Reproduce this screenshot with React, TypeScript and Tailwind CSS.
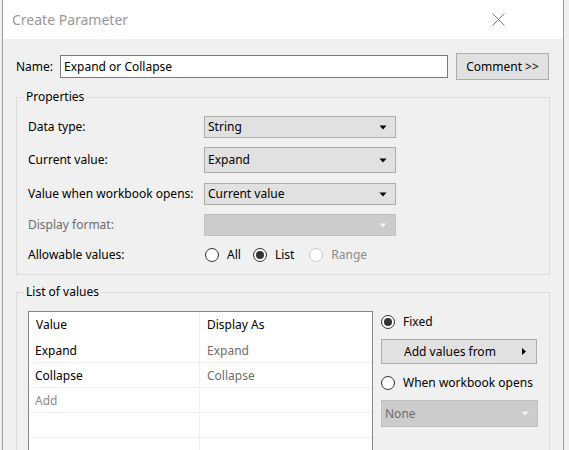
import React from "react";

function Radio({ checked, disabled }: { checked?: boolean; disabled?: boolean }) {
  return (
    <span
      className={
        "w-[14px] h-[14px] rounded-full border flex items-center justify-center shrink-0 bg-white " +
        (disabled ? "border-[#cccccc]" : "border-[#333333]")
      }
    >
      {checked && <span className="w-[8px] h-[8px] rounded-full bg-[#333333]" />}
    </span>
  );
}

function DownArrow({ disabled }: { disabled?: boolean }) {
  return (
    <svg width="8" height="5" viewBox="0 0 8 5" className="shrink-0">
      <path d="M0.5 0.5 L7.5 0.5 L4 4.5 Z" fill={disabled ? "#f4f4f4" : "#000"} />
    </svg>
  );
}

function Select({ value, h, disabled, w }: { value?: string; h: string; disabled?: boolean; w: string }) {
  return (
    <div
      className={
        "flex items-center justify-between pl-[3px] pr-[8px] border " +
        h +
        " " +
        w +
        " " +
        (disabled ? "bg-[#cccccc] border-[#bfbfbf] text-[#6d6d6d]" : "bg-[#e1e1e1] border-[#adadad] text-black")
      }
    >
      <span>{value}</span>
      <DownArrow disabled={disabled} />
    </div>
  );
}

export default function App() {
  const font = { fontFamily: '"Noto Sans", "Open Sans", sans-serif' };
  return (
    <div className="w-[569px] h-[450px] bg-[#f0f0f0] overflow-hidden text-[12px] leading-[16px] text-black" style={font}>
      <div className="ml-[2px] w-[562px] h-[450px] border-l border-r border-[#9a9a9a] bg-[#f0f0f0] flex flex-col">
        {/* title bar */}
        <div className="h-[39px] bg-white flex items-center justify-between shrink-0">
          <span className="pl-[9px] text-[14px] text-[#999999] leading-[20px]">Create Parameter</span>
          <svg width="13" height="13" viewBox="0 0 13 13" className="mr-[58px]">
            <path d="M0.5 0.5 L12.5 12.5 M12.5 0.5 L0.5 12.5" stroke="#777777" strokeWidth="1" />
          </svg>
        </div>

        <div className="px-[13px] flex flex-col">
          {/* Name row */}
          <div className="mt-[14px] h-[27px] flex items-center">
            <span className="w-[44px]">Name:</span>
            <div className="w-[388px] h-[23px] bg-white border border-[#7a7a7a] flex items-center px-[3px]">
              Expand or Collapse
            </div>
            <div className="ml-[8px] w-[93px] h-[27px] bg-[#e1e1e1] border border-[#adadad] flex items-center justify-center">
              Comment &gt;&gt;
            </div>
          </div>

          {/* Properties */}
          <fieldset className="mt-[9px] w-[534px] border border-[#dcdcdc] pb-[12px]">
            <legend className="ml-[7px] px-[2px] leading-[16px]">Properties</legend>
            <div className="pl-[11px] flex flex-col">
              <div className="mt-[11px] h-[22px] flex items-center">
                <span className="w-[176px]">Data type:</span>
                <Select value="String" h="h-[22px]" w="w-[192px]" />
              </div>
              <div className="mt-[9px] h-[26px] flex items-center">
                <span className="w-[176px]">Current value:</span>
                <Select value="Expand" h="h-[26px]" w="w-[192px]" />
              </div>
              <div className="mt-[10px] h-[22px] flex items-center">
                <span className="w-[176px]">Value when workbook opens:</span>
                <Select value="Current value" h="h-[22px]" w="w-[192px]" />
              </div>
              <div className="mt-[9px] h-[22px] flex items-center">
                <span className="w-[176px] text-[#6d6d6d]">Display format:</span>
                <Select value="" h="h-[22px]" w="w-[192px]" disabled />
              </div>
              <div className="mt-[12px] h-[14px] flex items-center">
                <span className="w-[177px]">Allowable values:</span>
                <Radio />
                <span className="ml-[8px]">All</span>
                <span className="ml-[12px]">
                  <Radio checked />
                </span>
                <span className="ml-[8px]">List</span>
                <span className="ml-[15px]">
                  <Radio disabled />
                </span>
                <span className="ml-[8px] text-[#8c8c8c]">Range</span>
              </div>
            </div>
          </fieldset>

          {/* List of values */}
          <fieldset className="mt-[9px] w-[534px] h-[200px] border border-[#dcdcdc]">
            <legend className="ml-[7px] px-[2px] leading-[16px]">List of values</legend>
            <div className="pl-[11px] mt-[11px] flex">
              <div className="w-[345px] h-[150px] bg-white border border-[#828790] flex flex-col">
                <div className="h-[26px] flex shrink-0">
                  <div className="w-[171px] border-r border-[#f0f0f0] pl-[7px] flex items-center">Value</div>
                  <div className="flex-1 pl-[7px] flex items-center">Display As</div>
                </div>
                {[
                  ["Expand", "Expand"],
                  ["Collapse", "Collapse"],
                  ["Add", ""],
                  ["", ""],
                  ["", ""],
                ].map(([a, b], i) => (
                  <div key={i} className="h-[25px] flex shrink-0 border-b border-[#f0f0f0]">
                    <div
                      className={
                        "w-[171px] border-r border-[#f0f0f0] pl-[6px] pt-[1px] flex items-center " +
                        (a === "Add" ? "text-[#8c8c8c]" : "text-black")
                      }
                    >
                      {a}
                    </div>
                    <div className="flex-1 pl-[7px] pt-[1px] flex items-center text-[#6d6d6d]">{b}</div>
                  </div>
                ))}
              </div>

              <div className="ml-[8px] w-[157px] flex flex-col">
                <div className="mt-[4px] h-[14px] flex items-center">
                  <Radio checked />
                  <span className="ml-[8px]">Fixed</span>
                </div>
                <div className="mt-[10px] w-[156px] h-[25px] bg-[#e1e1e1] border border-[#adadad] flex items-center pl-[22px] pr-[10px]">
                  <span>Add values from</span>
                  <svg width="4" height="7" viewBox="0 0 4 7" className="ml-auto">
                    <path d="M0 0 L4 3.5 L0 7 Z" fill="#000" />
                  </svg>
                </div>
                <div className="mt-[12px] h-[14px] flex items-center">
                  <Radio />
                  <span className="ml-[8px]">When workbook opens</span>
                </div>
                <div className="mt-[10px]">
                  <Select value="None" h="h-[27px]" w="w-[157px]" disabled />
                </div>
              </div>
            </div>
          </fieldset>
        </div>
      </div>
    </div>
  );
}
